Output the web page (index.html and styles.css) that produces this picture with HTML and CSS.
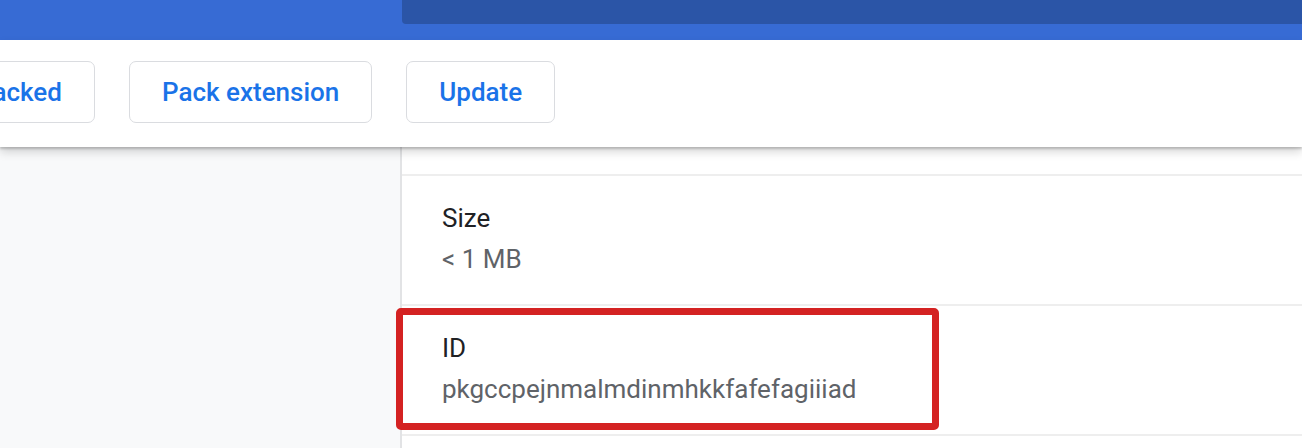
FILE: index.html
```html
<!DOCTYPE html>
<html>
<head>
<meta charset="utf-8">
<link rel="stylesheet" href="styles.css">
</head>
<body>
<header class="topbar">
  <div class="topbar-left"></div>
  <div class="search-field"></div>
</header>
<div class="toolbar">
  <div class="toolbar-buttons">
    <button class="btn">Load unpacked</button>
    <button class="btn">Pack extension</button>
    <button class="btn">Update</button>
  </div>
</div>
<div class="page">
  <aside class="sidebar"></aside>
  <main class="details">
    <div class="row-tail"></div>
    <section class="row">
      <div class="label">Size</div>
      <div class="value">&lt; 1 MB</div>
    </section>
    <section class="row">
      <div class="label">ID</div>
      <div class="value">pkgccpejnmalmdinmhkkfafefagiiiad</div>
      <div class="highlight"></div>
    </section>
    <section class="row"></section>
  </main>
</div>
</body>
</html>
```
FILE: styles.css
```css
* { box-sizing: border-box; }
html, body {
  margin: 0;
  padding: 0;
  height: 100%;
  overflow: hidden;
  background: #ffffff;
  font-family: Roboto, "Liberation Sans", Arial, sans-serif;
}
.topbar {
  height: 40px;
  background: #376bd4;
  display: flex;
}
.topbar-left {
  width: 402px;
  flex: none;
}
.search-field {
  flex: 1;
  height: 24px;
  background: #2b55a7;
  border-bottom-left-radius: 4px;
}
.toolbar {
  position: relative;
  z-index: 2;
  height: 107px;
  padding-top: 21px;
  background: #ffffff;
  box-shadow: 0 2px 2px rgba(0, 0, 0, 0.18), 0 5px 9px rgba(0, 0, 0, 0.16);
  display: flex;
  align-items: flex-start;
  overflow: hidden;
}
.toolbar-buttons {
  display: flex;
  gap: 34px;
  margin-left: -148px;
}
.btn {
  height: 62px;
  padding: 0 32px;
  background: #ffffff;
  border: 1.5px solid #dadce0;
  border-radius: 7px;
  color: #1a73e8;
  font-family: Roboto, "Liberation Sans", Arial, sans-serif;
  font-weight: 500;
  font-size: 26px;
  white-space: nowrap;
  flex: none;
}
.page {
  display: flex;
  height: 301px;
}
.sidebar {
  width: 402px;
  flex: none;
  background: #f8f9fa;
  border-right: 2px solid #e2e3e5;
}
.details {
  flex: 1;
  display: flex;
  flex-direction: column;
}
.row-tail {
  height: 27px;
  flex: none;
}
.row {
  position: relative;
  flex: none;
  height: 130px;
  border-top: 2px solid #eeeeee;
  padding: 22px 40px 0;
}
.label {
  font-size: 26px;
  line-height: 41px;
  color: #202124;
}
.value {
  font-size: 26px;
  line-height: 41px;
  color: #5f6368;
}
.highlight {
  position: absolute;
  left: -6px;
  top: 2px;
  width: 543px;
  height: 122px;
  border: 7.5px solid #d42222;
  border-radius: 5px;
}
```
